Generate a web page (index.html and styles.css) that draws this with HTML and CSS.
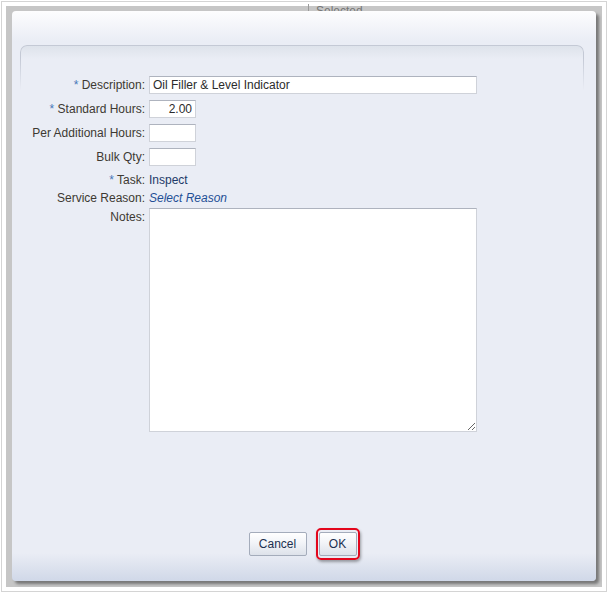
FILE: index.html
```html
<!DOCTYPE html>
<html lang="en">
<head>
    <meta charset="UTF-8">
    <meta name="viewport" content="width=device-width, initial-scale=1.0">
    <title>Edit Operation</title>
    <link rel="stylesheet" href="styles.css">
</head>
<body>
    <div class="frame">
        <div class="backdrop">
            <span class="behind-title">Selected</span>
            <div class="dialog">
                <div class="panel">
                    <div class="form">
                        <div class="row">
                            <label class="label"><span class="req">*</span> Description:</label>
                            <input class="field wide" type="text" value="Oil Filler &amp; Level Indicator">
                        </div>
                        <div class="row">
                            <label class="label"><span class="req">*</span> Standard Hours:</label>
                            <input class="field short num" type="text" value="2.00">
                        </div>
                        <div class="row">
                            <label class="label">Per Additional Hours:</label>
                            <input class="field short" type="text" value="">
                        </div>
                        <div class="row last-input">
                            <label class="label">Bulk Qty:</label>
                            <input class="field short" type="text" value="">
                        </div>
                        <div class="row text-row">
                            <label class="label"><span class="req">*</span> Task:</label>
                            <span class="value">Inspect</span>
                        </div>
                        <div class="row text-row reason-row">
                            <label class="label">Service Reason:</label>
                            <a class="link" href="#">Select Reason</a>
                        </div>
                        <div class="row notes-row">
                            <label class="label">Notes:</label>
                            <textarea class="notes"></textarea>
                        </div>
                    </div>
                </div>
                <div class="footer">
                    <button class="btn cancel">Cancel</button>
                    <div class="highlight">
                        <button class="btn ok">OK</button>
                    </div>
                </div>
            </div>
        </div>
    </div>
</body>
</html>
```

FILE: styles.css
```css
body, div, p{
    margin: 0;
    padding: 0;
}
body{
    background: #fff;
    font-family: "Liberation Sans", Arial, sans-serif;
    font-size: 12px;
}
.frame{
    margin: 1px 0 0 1px;
    width: 606px;
    height: 591px;
    border: 1px solid #d4d4d4;
    padding: 4px;
    box-sizing: border-box;
}
.backdrop{
    position: relative;
    height: 581px;
    background: #c6c6c6;
    padding: 5px 6px 6px 6px;
    box-sizing: border-box;
}
.behind-title{
    position: absolute;
    top: -2px;
    left: 302px;
    color: #777;
    font-size: 12px;
    padding-left: 7px;
    border-left: 1px solid #9a9a9a;
}
.dialog{
    position: relative;
    display: flex;
    flex-direction: column;
    height: 570px;
    border-radius: 4px;
    background: linear-gradient(to bottom, #fdfdfe 0, #eaedf5 30px, #eaedf5 calc(100% - 28px), #d0d8e8 100%);
    box-shadow: 3px 3px 3px rgba(0, 0, 0, 0.4);
}
.panel{
    position: relative;
    flex: 1;
    margin: 34px 12px 0 8px;
    border-radius: 7px 7px 0 0;
    background: linear-gradient(to bottom, #dde2ea 0, #eaedf5 14px);
}
.panel::before{
    content: "";
    position: absolute;
    top: 0;
    left: 0;
    right: 0;
    height: 44px;
    border: 1px solid #c4c9d5;
    border-bottom: none;
    border-radius: 7px 7px 0 0;
    -webkit-mask-image: linear-gradient(to bottom, #000 30%, transparent);
    mask-image: linear-gradient(to bottom, #000 30%, transparent);
}
.form{
    padding-top: 31px;
}
.row{
    display: flex;
    align-items: center;
    margin-bottom: 6px;
}
.label{
    width: 125px;
    padding-right: 4px;
    text-align: right;
    color: #3d3932;
    white-space: nowrap;
}
.req{
    color: #4677b8;
}
.field{
    height: 18px;
    box-sizing: border-box;
    margin: 0;
    padding: 0 3px;
    background: #fff;
    border: 1px solid #cfd2d9;
    border-top-color: #aeb3be;
    font-family: "Liberation Sans", Arial, sans-serif;
    font-size: 12px;
    color: #2b2b2b;
    outline: none;
}
.wide{
    width: 328px;
}
.short{
    width: 47px;
}
.num{
    text-align: right;
}
.last-input{
    margin-bottom: 5px;
}
.text-row{
    height: 17px;
    margin-bottom: 1px;
}
.reason-row{
    margin-bottom: 2px;
}
.value{
    color: #1d3a68;
}
.link{
    color: #1f4f96;
    font-style: italic;
    text-decoration: none;
}
.notes-row{
    align-items: flex-start;
}
.notes-row .label{
    padding-top: 2px;
}
.notes{
    width: 328px;
    height: 224px;
    box-sizing: border-box;
    margin: 0;
    background: #fff;
    border: 1px solid #cfd2d9;
    border-top-color: #aeb3be;
    outline: none;
}
.footer{
    display: flex;
    justify-content: center;
    align-items: center;
    gap: 9px;
    height: 61px;
    padding: 8px 0 22px;
    box-sizing: border-box;
}
.btn{
    height: 24px;
    margin: 0;
    padding: 0 9px;
    border: 1px solid #a4acbb;
    border-radius: 2px;
    background: linear-gradient(to bottom, #ffffff 0, #f2f4f8 45%, #dde2ea 100%);
    font-family: "Liberation Sans", Arial, sans-serif;
    font-size: 12px;
    color: #1c3050;
}
.cancel{
    width: 58px;
}
.ok{
    width: 38px;
    display: block;
}
.highlight{
    padding: 2px 1px;
    border: 2px solid #e3061c;
    border-radius: 5px;
    box-shadow: 1px 2px 3px rgba(0, 0, 0, 0.35);
}
```
